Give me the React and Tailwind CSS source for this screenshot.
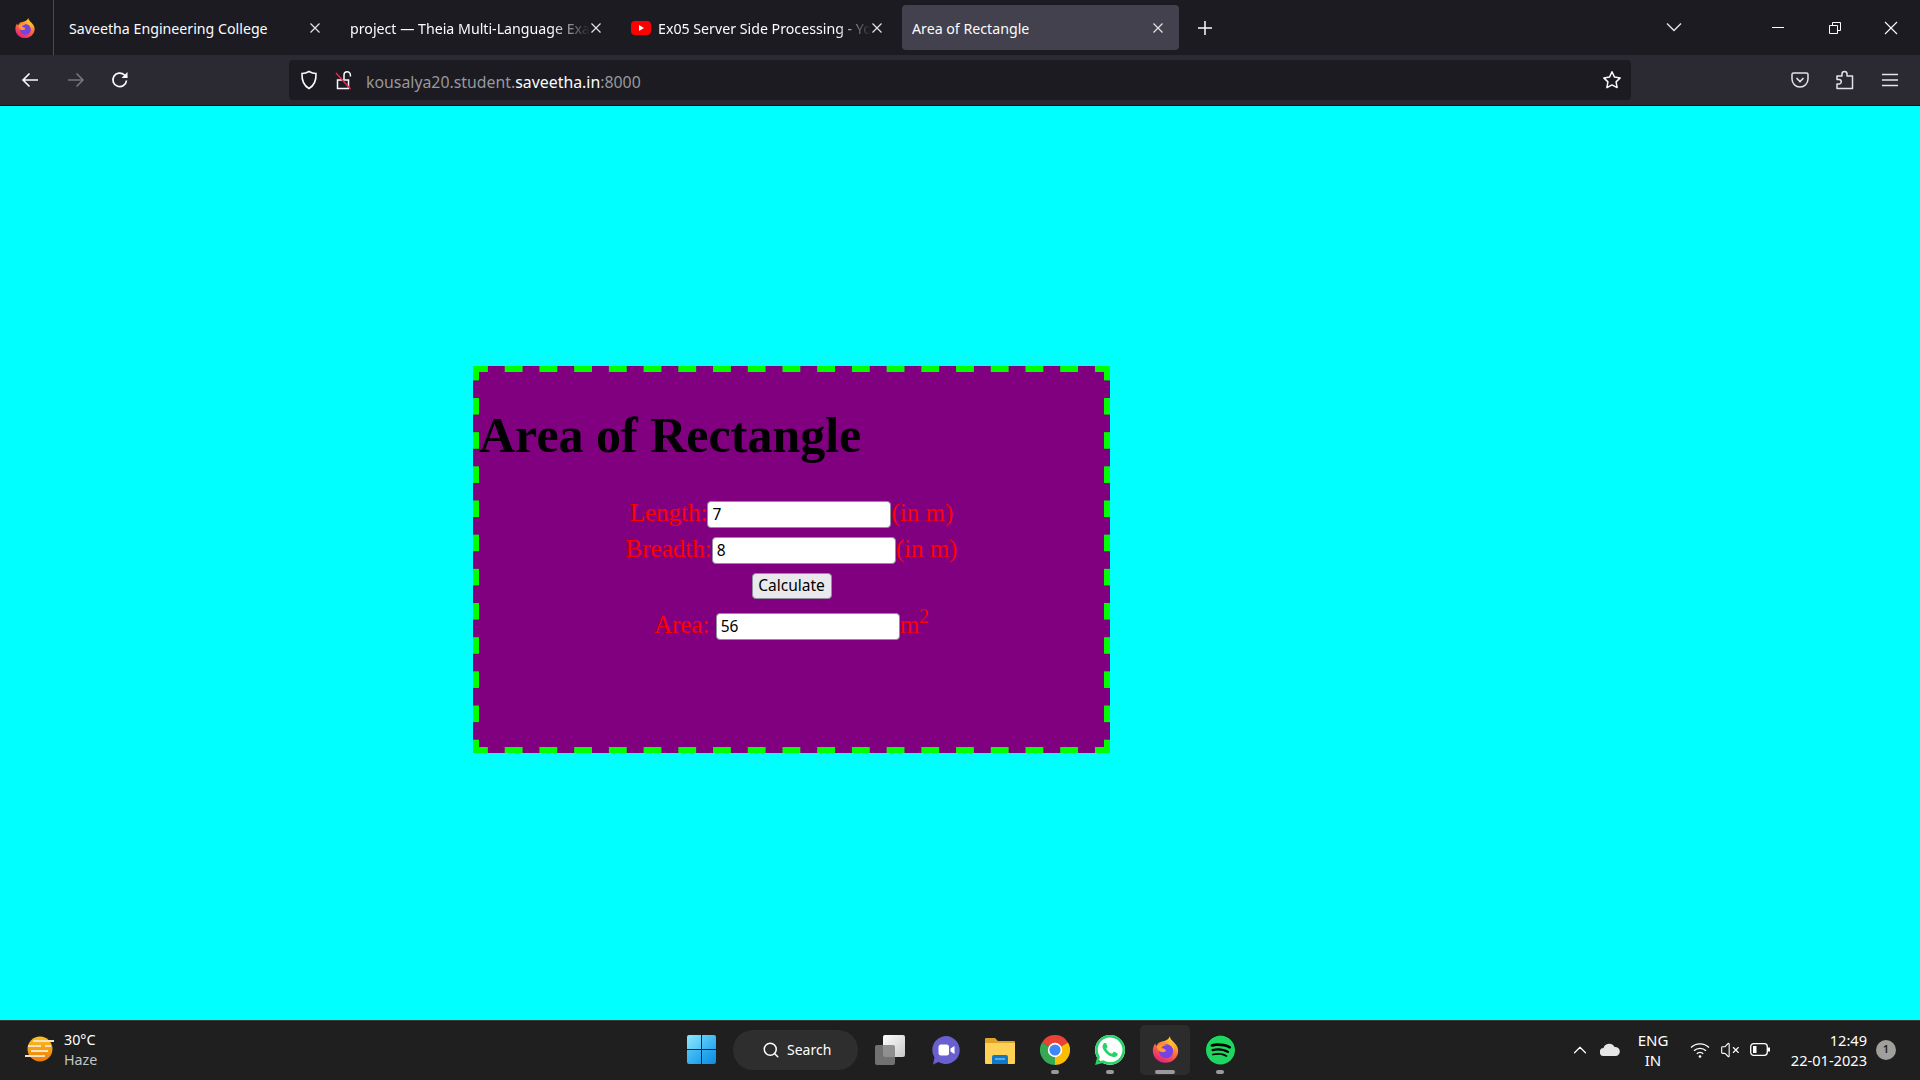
import React from 'react';
import { SiWhatsapp, SiSpotify } from 'react-icons/si';
import { Search, ChevronUp, VolumeX } from 'lucide-react';

const ui = "font-['Noto_Sans','Open_Sans',sans-serif]";

function CloseX({ size = 12, color = '#e4e4e7' }) {
  return (
    <svg width={size} height={size} viewBox="0 0 12 12" className="shrink-0">
      <path d="M1.5 1.5l9 9M10.5 1.5l-9 9" stroke={color} strokeWidth="1.2" fill="none" />
    </svg>
  );
}

function Firefox({ size = 22 }) {
  return (
    <svg width={size} height={size} viewBox="0 0 24 24">
      <defs>
        <linearGradient id="ffa" x1="0.7" y1="0" x2="0.2" y2="1">
          <stop offset="0" stopColor="#ffe226" />
          <stop offset="0.45" stopColor="#ff7139" />
          <stop offset="1" stopColor="#e31587" />
        </linearGradient>
      </defs>
      <path d="M15.5 1c.4 2.4 2 3.4 3.6 5.2C21.300 8.500 22.500 10.300 22.500 13c0 5.500-4.600 10-10.500 10S1.500 18.500 1.500 13c0-2.600.8-4.500 2-6 .1 1 .5 1.700 1.100 2.200C5.200 7 6.500 6 8 5.700 10.500 5 14.500 4.500 15.500 1z" fill="url(#ffa)" />
      <circle cx="12.500" cy="13.500" r="5.800" fill="#7542e5" />
      <path d="M4.500 9.500C7 7.500 10.500 7 13 8.500c-2 0-4 .8-4.500 2.500 1.500 0 3.500.5 4 2-1.500 1.800-5 1.500-6.500-.5z" fill="#ff9a2e" />
      <path d="M15 5c3 1.500 4.500 4.500 4 8-.5-2.500-2-4.500-4.500-5.500z" fill="#ffbd2e" />
    </svg>
  );
}

function Tab({ width, pl, pr, icon, text, active, fade }) {
  return (
    <div className={`flex h-[45px] items-center rounded-[4px] ${active ? 'bg-[#42414d]' : ''} ${width} ${pl} ${pr}`}>
      {icon}
      <span className={`min-w-0 flex-1 overflow-hidden whitespace-nowrap pt-[3px] text-[14.200px] text-[#fbfbfe] ${fade ? '[mask-image:linear-gradient(90deg,#000_84%,transparent_100%)]' : ''}`}>
        {text}
      </span>
      <CloseX />
    </div>
  );
}

function TitleBar() {
  return (
    <div className="flex h-[55px] items-center bg-[#1c1b22]">
      <div className="flex h-full w-[54px] items-center border-r border-[#4a4a52] pl-[14px]">
        <Firefox />
      </div>
      <Tab width="w-[286px]" pl="pl-[15px]" pr="pr-[19px]" text="Saveetha Engineering College" />
      <Tab width="w-[282px]" pl="pl-[10px]" pr="pr-[20px]" text="project — Theia Multi-Language Exa" fade />
      <Tab
        width="w-[270px]"
        pl="pl-[9px]"
        pr="pr-[9px]"
        text="Ex05 Server Side Processing - YouTube"
        fade
        icon={
          <svg width="20" height="14" viewBox="0 0 20 14" className="mr-[7px] shrink-0">
            <rect width="20" height="14" rx="4" fill="#f00" />
            <path d="M8 4l5 3-5 3z" fill="#fff" />
          </svg>
        }
      />
      <div className="ml-[10px]">
        <Tab width="w-[277px]" pl="pl-[10px]" pr="pr-[15px]" text="Area of Rectangle" active />
      </div>
      <svg width="16" height="16" viewBox="0 0 16 16" className="ml-[18px]">
        <path d="M8 1v14M1 8h14" stroke="#fbfbfe" strokeWidth="1.500" />
      </svg>
      <svg width="16" height="10" viewBox="0 0 16 10" className="mb-[2px] ml-[453px]">
        <path d="M1 1.500l7 7 7-7" stroke="#e4e4e7" strokeWidth="1.400" fill="none" />
      </svg>
      <div className="ml-[90px] h-px w-[12px] bg-[#fbfbfe]" />
      <svg width="12" height="12" viewBox="0 0 12 12" className="ml-[45px]">
        <path d="M.5 3.500h8v8h-8zM3.500 3.500v-3h8v8h-3" stroke="#fbfbfe" strokeWidth="1" fill="none" />
      </svg>
      <svg width="14" height="14" viewBox="0 0 14 14" className="ml-[43px]">
        <path d="M1 1l12 12M13 1L1 13" stroke="#fbfbfe" strokeWidth="1.100" />
      </svg>
    </div>
  );
}

function NavBar() {
  return (
    <div className="flex h-[51px] items-center border-b border-[#0c0c0d] bg-[#2b2a33]">
      <svg width="20" height="20" viewBox="0 0 20 20" className="ml-[20px]">
        <path d="M18 10H3M9.500 3.500L3 10l6.500 6.500" stroke="#fbfbfe" strokeWidth="1.600" fill="none" />
      </svg>
      <svg width="20" height="20" viewBox="0 0 20 20" className="ml-[26px]">
        <path d="M2 10h15M10.500 3.500L17 10l-6.500 6.500" stroke="#77767e" strokeWidth="1.600" fill="none" />
      </svg>
      <svg width="20" height="20" viewBox="0 0 20 20" className="ml-[24px]">
        <path d="M16.500 10.500a6.800 6.800 0 1 1-2-5.500L17 7.500" stroke="#fbfbfe" strokeWidth="1.700" fill="none" />
        <path d="M17.500 2v6h-6z" fill="#fbfbfe" />
      </svg>
      <div className="ml-[159px] flex h-[40px] w-[1342px] items-center rounded-[4px] bg-[#1c1b22] pl-[11px] pr-[9px]">
        <svg width="18" height="20" viewBox="0 0 18 20">
          <path d="M9 1.500c2.500 1.500 4.500 2 7 2 .3 7-1.500 12-7 15-5.500-3-7.300-8-7-15 2.500 0 4.500-.5 7-2z" stroke="#fbfbfe" strokeWidth="1.600" fill="none" />
        </svg>
        <svg width="18" height="20" viewBox="0 0 18 20" className="ml-[17px]">
          <path d="M2.500 10h11v8.500h-11z" stroke="#fbfbfe" strokeWidth="1.500" fill="none" />
          <path d="M9 9.500V5a3.200 3.200 0 0 1 6.400 0v1.500" stroke="#fbfbfe" strokeWidth="1.500" fill="none" />
          <path d="M1 3l14.500 16" stroke="#e22850" strokeWidth="1.500" />
        </svg>
        <div className="ml-[13px] flex-1 whitespace-nowrap pt-[5px] text-[15.850px] text-[#98989c]">
          kousalya20.student.<span className="text-[#fbfbfe]">saveetha.in</span>:8000
        </div>
        <svg width="20" height="20" viewBox="0 0 20 20">
          <path d="M10 1.800l2.500 5.300 5.700.8-4.100 4 1 5.700-5.100-2.700-5.100 2.700 1-5.700-4.100-4 5.700-.8z" stroke="#fbfbfe" strokeWidth="1.500" strokeLinejoin="round" fill="none" />
        </svg>
      </div>
      <svg width="18" height="18" viewBox="0 0 18 18" className="ml-[160px]">
        <path d="M2.500 2h13A1.500 1.500 0 0 1 17 3.500V8a8 8 0 0 1-16 0V3.500A1.500 1.500 0 0 1 2.500 2z" stroke="#e4e4e7" strokeWidth="1.500" fill="none" />
        <path d="M5.500 7L9 10.500 12.500 7" stroke="#e4e4e7" strokeWidth="1.600" fill="none" />
      </svg>
      <svg width="18" height="20" viewBox="0 0 18 20" className="ml-[27px]">
        <path d="M1 18.500v-4.500h2a2 2 0 0 0 0-4.500H1V6h5V4a2.500 2.500 0 0 1 5 0v2h5.500v12.500z" stroke="#e4e4e7" strokeWidth="1.500" strokeLinejoin="round" fill="none" />
      </svg>
      <svg width="16" height="14" viewBox="0 0 16 14" className="ml-[28px]">
        <path d="M0 1.500h16M0 7h16M0 12.500h16" stroke="#e4e4e7" strokeWidth="1.500" />
      </svg>
    </div>
  );
}

function FormRow({ className, label, value, unit }) {
  return (
    <div className={`text-center text-[25px] leading-[36px] text-[#ff0000] ${className}`}>
      {label}
      <input
        readOnly
        value={value}
        className={`${ui} h-[27px] w-[184px] rounded-[4px] border border-[#8f8f9d] bg-white pl-[4px] align-[1px] text-[15.500px] text-black`}
      />
      {unit}
    </div>
  );
}

function Card() {
  return (
    <div className="h-[387px] w-[637px] bg-[#800080] p-[6px] font-['Liberation_Serif',serif] [background-image:linear-gradient(90deg,#00ff00_18px,transparent_18px),linear-gradient(90deg,#00ff00_18px,transparent_18px),linear-gradient(#00ff00_16.500px,transparent_16.500px),linear-gradient(#00ff00_16.500px,transparent_16.500px)] [background-position:-3px_0,-3px_100%,0_-2.200px,100%_-2.200px] [background-repeat:repeat-x,repeat-x,repeat-y,repeat-y] [background-size:34.720px_6px,34.720px_6px,6px_34.180px,6px_34.180px]">
      <h1 className="mt-[36px] text-[50px] font-bold leading-[55px] text-black">Area of Rectangle</h1>
      <div className="mt-[32px]">
        <FormRow className="h-[36px]" label="Length:" value="7" unit="(in m)" />
        <FormRow className="h-[36px]" label="Breadth:" value="8" unit="(in m)" />
        <div className="flex h-[36px] justify-center pt-[6px]">
          <button className={`${ui} h-[26px] w-[80px] rounded-[4px] border border-[#8f8f9d] bg-[#e9e9ed] text-[15.500px] leading-none text-black`}>
            Calculate
          </button>
        </div>
        <FormRow
          className="mt-[4px]"
          label={<span>Area:&nbsp;</span>}
          value="56"
          unit={
            <span>
              m<sup className="text-[20px]">2</sup>
            </span>
          }
        />
      </div>
    </div>
  );
}

function Slot({ children, active, mark }) {
  return (
    <div className={`relative flex h-[50px] w-[50px] items-center justify-center rounded-[5px] ${active ? 'bg-[#2c2c2c]' : ''}`}>
      {children}
      {mark && (
        <span className={`absolute bottom-[1px] h-[4px] rounded-full bg-[#9a9a9a] ${active ? 'w-[20px]' : 'w-[8px]'}`} />
      )}
    </div>
  );
}

function Weather() {
  return (
    <svg width="30" height="28" viewBox="0 0 30 28">
      <defs>
        <linearGradient id="sun" x1="0" y1="0" x2="0" y2="1">
          <stop offset="0" stopColor="#ffc21f" />
          <stop offset="1" stopColor="#ee7a06" />
        </linearGradient>
      </defs>
      <circle cx="15" cy="13" r="12.500" fill="url(#sun)" />
      <path d="M8 5h21M3 10h13M20 10h6M6 15h17M0 20h20" stroke="#f1e3c0" strokeWidth="2.200" />
    </svg>
  );
}

function Chrome() {
  return (
    <svg width="30" height="30" viewBox="0 0 30 30">
      <path d="M15 15L2 7.500A15 15 0 0 1 28 7.500z" fill="#ea4335" />
      <path d="M15 15L28 7.500A15 15 0 0 1 15 30z" fill="#fbbc04" />
      <path d="M15 15L15 30A15 15 0 0 1 2 7.500z" fill="#34a853" />
      <circle cx="15" cy="15" r="7.200" fill="#fff" />
      <circle cx="15" cy="15" r="5.600" fill="#4285f4" />
    </svg>
  );
}

function Taskbar() {
  return (
    <div className={`${ui} flex h-[60px] items-center border-t border-[#3a3a3a] bg-[#1f1f1f] pb-[2px] text-white`}>
      <div className="ml-[25px]">
        <Weather />
      </div>
      <div className="ml-[9px] w-[100px] text-[14.300px] leading-[20px]">
        <div>30°C</div>
        <div className="text-[#c4c4c4]">Haze</div>
      </div>
      <div className="ml-[523px] grid h-[29px] w-[29px] grid-cols-2 gap-[1px]">
        <span className="rounded-tl-[2px] bg-gradient-to-br from-[#8be6ff] to-[#4cc5f5]" />
        <span className="rounded-tr-[2px] bg-gradient-to-br from-[#5fcdf9] to-[#22a7ee]" />
        <span className="rounded-bl-[2px] bg-gradient-to-br from-[#4cc3f5] to-[#1d9fea]" />
        <span className="rounded-br-[2px] bg-gradient-to-br from-[#2eb0f2] to-[#0d8ae0]" />
      </div>
      <div className="ml-[17px] flex h-[40px] w-[125px] items-center rounded-full bg-[#2e2e2e] pl-[29px] text-[14px]">
        <Search size={18} strokeWidth={2} className="mr-[7px]" />
        Search
      </div>
      <div className="ml-[7px] flex">
        <div className="mr-[5px]">
          <Slot>
            <span className="relative block h-[30px] w-[30px]">
              <span className="absolute right-0 top-0 h-[22px] w-[22px] rounded-[2px] bg-gradient-to-br from-white to-[#c8c8c8]" />
              <span className="absolute bottom-0 left-0 h-[20px] w-[20px] rounded-[2px] bg-[#808080]/85" />
            </span>
          </Slot>
        </div>
        <div className="mr-[5px]">
          <Slot>
            <svg width="29" height="30" viewBox="0 0 29 30">
              <path d="M14.500 1a14 14 0 1 1-7 26L2 29.500l1.500-7A14 14 0 0 1 14.500 1z" fill="#6a5fcf" />
              <rect x="7.500" y="9.500" width="10.500" height="11" rx="2.500" fill="#fff" />
              <path d="M19.500 13.500l4-2.500v8l-4-2.500z" fill="#fff" />
            </svg>
          </Slot>
        </div>
        <div className="mr-[5px]">
          <Slot>
            <svg width="30" height="30" viewBox="0 0 30 30">
              <path d="M0 4a1 1 0 0 1 1-1h9l3 3h16a1 1 0 0 1 1 1v3H0z" fill="#e0a526" />
              <path d="M0 8h30v20a1 1 0 0 1-1 1H1a1 1 0 0 1-1-1z" fill="#ffd257" />
              <path d="M7 22a2 2 0 0 1 2-2h12a2 2 0 0 1 2 2v7H7z" fill="#0f78c8" />
              <path d="M10 24h10" stroke="#8fd0f5" strokeWidth="1.200" />
            </svg>
          </Slot>
        </div>
        <div className="mr-[5px]">
          <Slot mark>
            <Chrome />
          </Slot>
        </div>
        <div className="mr-[5px]">
          <Slot mark>
            <span className="flex h-[30px] w-[30px] items-center justify-center rounded-full bg-white">
              <SiWhatsapp size={32} color="#25d366" />
            </span>
          </Slot>
        </div>
        <div className="mr-[5px]">
          <Slot active mark>
            <Firefox size={29} />
          </Slot>
        </div>
        <Slot mark>
          <span className="flex h-[29px] w-[29px] items-center justify-center rounded-full bg-black">
            <SiSpotify size={30} color="#1ed760" />
          </span>
        </Slot>
      </div>
      <ChevronUp size={22} strokeWidth={1.300} className="ml-[324px]" />
      <svg width="20" height="13" viewBox="0 0 20 13" className="ml-[9px]">
        <path d="M4 13a4 4 0 0 1-.5-8A6 6 0 0 1 14.500 4 4.500 4.500 0 0 1 16 13z" fill="#e6e6e6" />
      </svg>
      <div className="ml-[10px] w-[46px] text-center text-[15px] leading-[20px]">
        <div>ENG</div>
        <div>IN</div>
      </div>
      <svg width="20" height="16" viewBox="0 0 20 16" className="ml-[14px]">
        <path d="M1 5.500a13 13 0 0 1 18 0M4 8.800a8.500 8.500 0 0 1 12 0M6.800 11.800a4.500 4.500 0 0 1 6.400 0" stroke="#fff" strokeWidth="1.300" fill="none" />
        <circle cx="10" cy="14.500" r="1.300" fill="#fff" />
      </svg>
      <VolumeX size={20} strokeWidth={1.300} className="ml-[10px]" />
      <svg width="20" height="13" viewBox="0 0 20 13" className="ml-[10px]">
        <rect x="0.700" y="0.700" width="16.600" height="11.600" rx="3" stroke="#fff" strokeWidth="1.300" fill="none" />
        <rect x="3" y="3" width="3.500" height="7" fill="#fff" />
        <rect x="18" y="4.500" width="2" height="4" fill="#fff" />
      </svg>
      <div className="ml-[7px] w-[90px] text-right text-[14.600px] leading-[20px]">
        <div>12:49</div>
        <div>22-01-2023</div>
      </div>
      <div className="ml-[9px] flex h-[20px] w-[20px] items-center justify-center rounded-full bg-[#a09f9b] text-[11px] font-semibold text-[#1f1f1f]">
        1
      </div>
    </div>
  );
}

export default function App() {
  return (
    <div className={`${ui} flex h-screen w-full flex-col overflow-hidden`}>
      <TitleBar />
      <NavBar />
      <div className="flex-1 bg-[#00ffff] pl-[473px] pt-[260px]">
        <Card />
      </div>
      <Taskbar />
    </div>
  );
}
